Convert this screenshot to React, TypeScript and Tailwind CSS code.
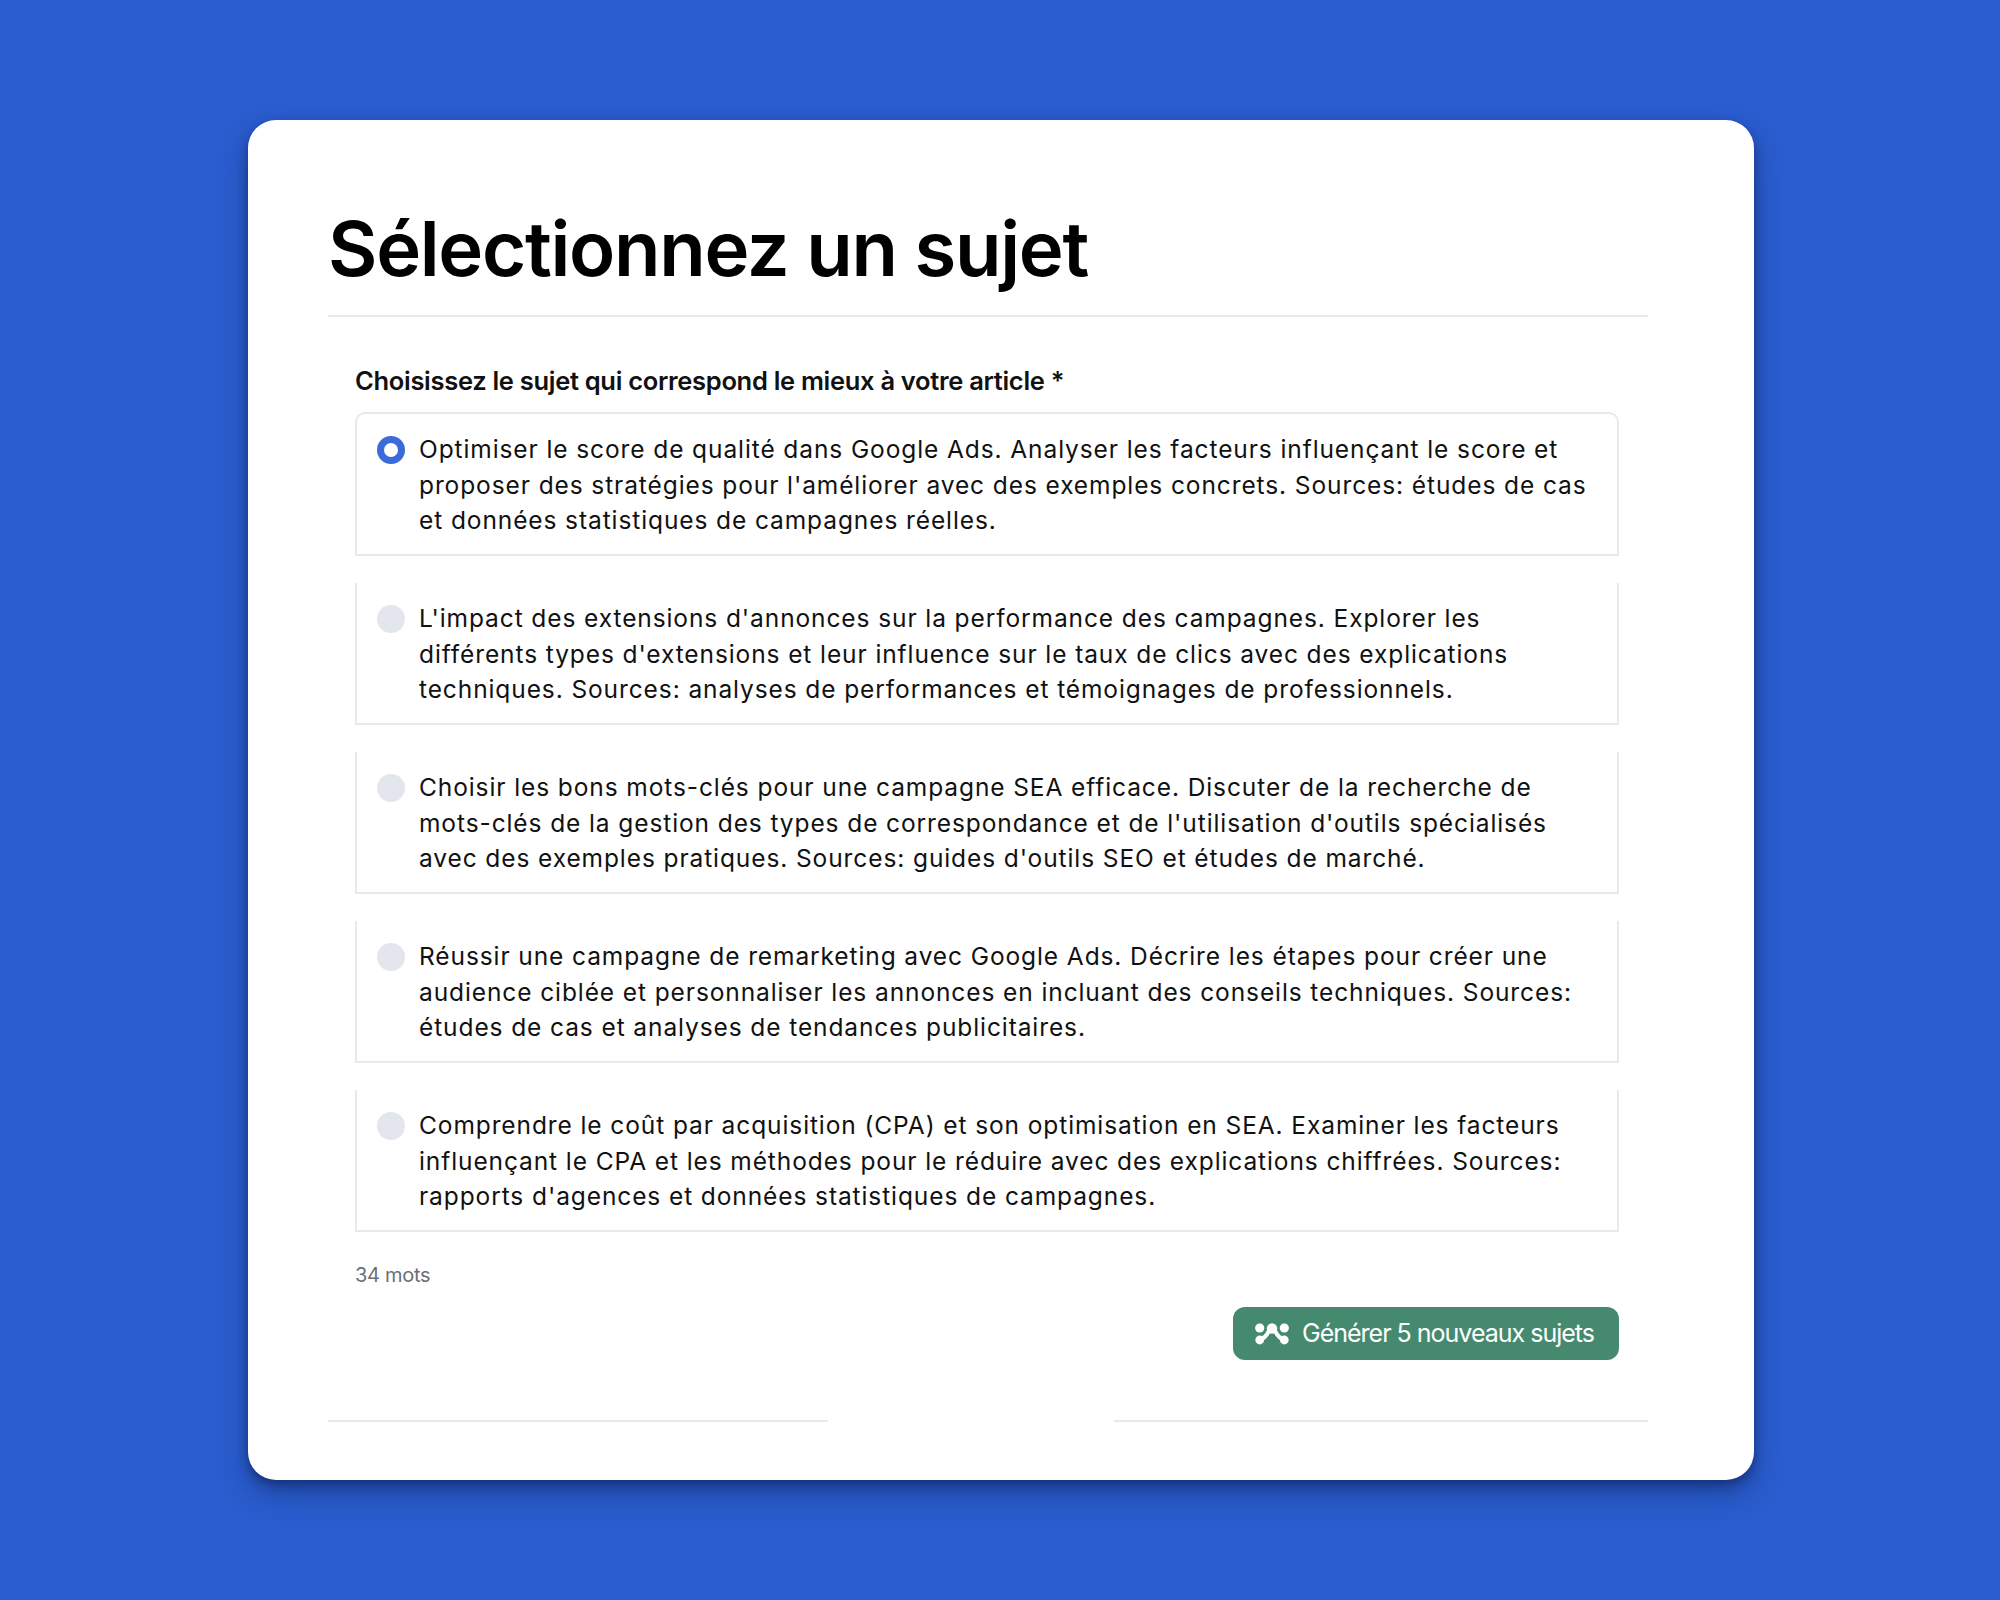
const options = [
  ['Optimiser le score de qualité dans Google Ads. Analyser les facteurs influençant le score et', "proposer des stratégies pour l'améliorer avec des exemples concrets. Sources: études de cas", 'et données statistiques de campagnes réelles.'],
  ["L'impact des extensions d'annonces sur la performance des campagnes. Explorer les", "différents types d'extensions et leur influence sur le taux de clics avec des explications", 'techniques. Sources: analyses de performances et témoignages de professionnels.'],
  ['Choisir les bons mots-clés pour une campagne SEA efficace. Discuter de la recherche de', "mots-clés de la gestion des types de correspondance et de l'utilisation d'outils spécialisés", "avec des exemples pratiques. Sources: guides d'outils SEO et études de marché."],
  ['Réussir une campagne de remarketing avec Google Ads. Décrire les étapes pour créer une', 'audience ciblée et personnaliser les annonces en incluant des conseils techniques. Sources:', 'études de cas et analyses de tendances publicitaires.'],
  ['Comprendre le coût par acquisition (CPA) et son optimisation en SEA. Examiner les facteurs', 'influençant le CPA et les méthodes pour le réduire avec des explications chiffrées. Sources:', "rapports d'agences et données statistiques de campagnes."],
]

function NodesIcon() {
  return (
    <svg width="34" height="22" viewBox="0 0 34 22" fill="#fff">
      <circle cx="4.7" cy="5" r="4.6" />
      <circle cx="29.3" cy="5" r="4.6" />
      <circle cx="17" cy="5.5" r="5.2" />
      <circle cx="4.7" cy="17" r="4.4" />
      <circle cx="29.3" cy="17" r="4.4" />
      <path d="M4.7 17 Q10 15.5 14 8 M29.3 17 Q24 15.5 20 8" fill="none" stroke="#fff" strokeWidth="4" strokeLinecap="round" />
    </svg>
  )
}

export default function App() {
  return (
    <div className="min-h-[1600px] bg-[#2a5dcf] pt-[120px] font-['Inter',sans-serif] text-[#111]">
      <div className="ml-[248px] h-[1360px] w-[1506px] rounded-[28px] bg-white pt-[81px] pr-[106px] pl-20 shadow-[0_5px_10px_rgba(15,30,80,0.5),0_14px_30px_rgba(15,35,90,0.4)]">
        <h1 className="border-b-2 border-[#e8e9ec] pb-[19px] text-[76px] leading-[95px] font-semibold tracking-[-1.3px] text-black">
          Sélectionnez un sujet
        </h1>

        <div className="pt-[46px] pr-[29px] pl-[27px]">
          <p className="text-[25.5px] leading-[36px] font-semibold tracking-[-0.3px]">
            Choisissez le sujet qui correspond le mieux à votre article *
          </p>

          <div className="mt-[13px] flex flex-col gap-[27px]">
            {options.map((lines, i) => (
              <label
                key={i}
                className={`flex gap-[14px] border-x-2 border-b-2 border-[#e8e9ec] pt-[4px] pl-[20px] ${i === 0 ? 'h-[144px] rounded-t-[10px] border-t-2' : 'h-[142px]'}`}
              >
                {i === 0 ? (
                  <span className="mt-[18px] h-[28px] w-[28px] shrink-0 rounded-full border-[7px] border-[#3b6bd8] bg-white" />
                ) : (
                  <span className="mt-[18px] h-[28px] w-[28px] shrink-0 rounded-full bg-[#e3e6ec]" />
                )}
                <span className="mt-[14px] text-[24.5px] leading-[35.5px] tracking-[0.9px] whitespace-nowrap">
                  {lines.map((l) => (
                    <span key={l} className="block">{l}</span>
                  ))}
                </span>
              </label>
            ))}
          </div>

          <p className="mt-[29px] text-[20px] leading-[28px] tracking-[-0.3px] text-[#6b6f76]">34 mots</p>

          <div className="mt-[18px] flex justify-end">
            <button className="flex h-[53px] w-[386px] items-center gap-[13px] rounded-[12px] bg-[#458a6e] pl-[22px] text-[25px] tracking-[-1px] text-white">
              <NodesIcon />
              Générer 5 nouveaux sujets
            </button>
          </div>
        </div>

        <div className="mt-[60px] flex justify-between">
          <div className="h-[2px] w-[500px] bg-[#e8e9ec]" />
          <div className="h-[2px] w-[534px] bg-[#e8e9ec]" />
        </div>
      </div>
    </div>
  )
}
